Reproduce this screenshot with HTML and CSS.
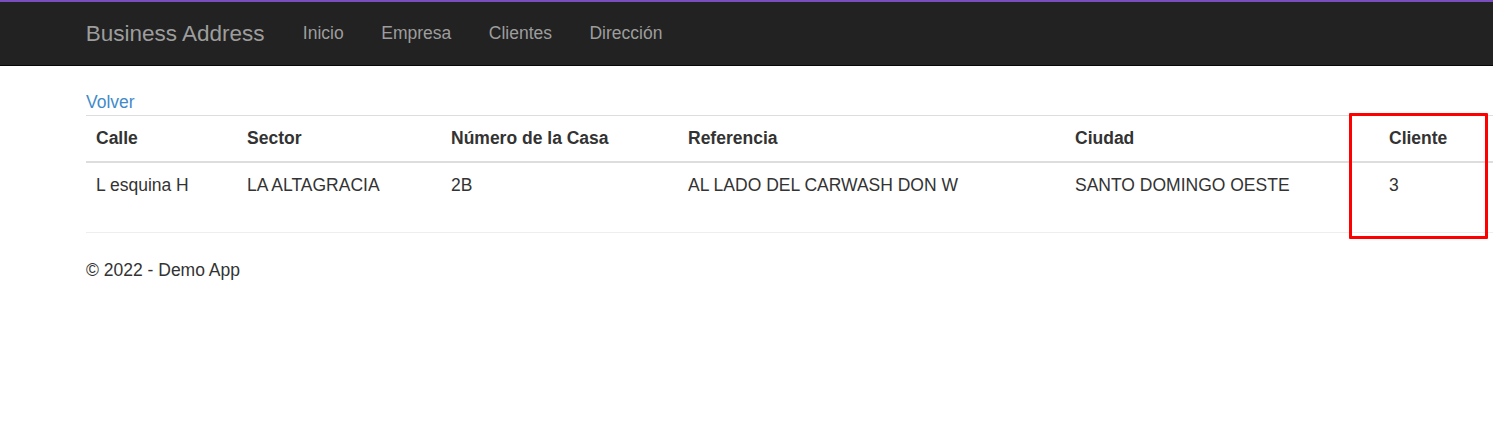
FILE: index.html
```html
<!DOCTYPE html>
<html lang="es">
<head>
<meta charset="utf-8">
<title>Business Address</title>
<link rel="stylesheet" href="styles.css">
</head>
<body>
<header class="navbar">
  <div class="nav-inner">
    <a class="brand" href="#">Business Address</a>
    <nav class="nav-links">
      <a href="#">Inicio</a>
      <a href="#">Empresa</a>
      <a href="#">Clientes</a>
      <a href="#">Dirección</a>
    </nav>
  </div>
</header>
<main class="body-content">
  <a class="back-link" href="#">Volver</a>
  <table class="table">
    <colgroup>
      <col class="c1"><col class="c2"><col class="c3"><col class="c4"><col class="c5"><col class="c6">
    </colgroup>
    <thead>
      <tr>
        <th>Calle</th>
        <th>Sector</th>
        <th>Número de la Casa</th>
        <th>Referencia</th>
        <th>Ciudad</th>
        <th>Cliente</th>
      </tr>
    </thead>
    <tbody>
      <tr>
        <td>L esquina H</td>
        <td>LA ALTAGRACIA</td>
        <td>2B</td>
        <td>AL LADO DEL CARWASH DON W</td>
        <td>SANTO DOMINGO OESTE</td>
        <td>3</td>
      </tr>
    </tbody>
  </table>
  <hr class="rule">
  <footer class="footer">
    <p>© 2022 - Demo App</p>
  </footer>
</main>
<div class="highlight"></div>
</body>
</html>
```

FILE: styles.css
```css
html, body {
  margin: 0;
  padding: 0;
  overflow: hidden;
}

body {
  font-family: "Liberation Sans", Arial, sans-serif;
  font-size: 17.5px;
  line-height: 25px;
  color: #333333;
  background: #ffffff;
  position: relative;
  width: 1493px;
  height: 447px;
}

a {
  text-decoration: none;
}

.navbar {
  background: #222222;
  border-top: 2px solid #7a4fbd;
  border-bottom: 1px solid #080808;
  height: 63px;
}

.nav-inner {
  display: flex;
  align-items: center;
  height: 100%;
  margin-left: 67px;
}

.brand {
  color: #9d9d9d;
  font-size: 22.5px;
  line-height: 25px;
  padding: 0 19.5px 0 18.75px;
}

.nav-links {
  display: flex;
}

.nav-links a {
  color: #9d9d9d;
  font-size: 17.5px;
  line-height: 25px;
  padding: 0 18.75px;
}

.body-content {
  padding-left: 86px;
  padding-top: 24px;
  width: 1407px;
}

.back-link {
  display: block;
  color: #428bca;
  line-height: 25px;
}

.table {
  width: 1407px;
  table-layout: fixed;
  border-collapse: collapse;
  border-spacing: 0;
  margin-bottom: 24px;
}

.c1 { width: 151px; }
.c2 { width: 204px; }
.c3 { width: 237px; }
.c4 { width: 387px; }
.c5 { width: 314px; }
.c6 { width: auto; }

.table th,
.table td {
  text-align: left;
  padding: 10px;
  line-height: 25px;
  vertical-align: top;
  white-space: nowrap;
}

.table th {
  font-weight: bold;
  border-top: 1px solid #dddddd;
  border-bottom: 2px solid #dddddd;
}

.rule {
  margin: 0;
  border: 0;
  border-top: 1px solid #eeeeee;
  width: 1407px;
}

.footer p {
  margin: 25px 0 0;
}

.highlight {
  position: absolute;
  left: 1349px;
  top: 113px;
  width: 133px;
  height: 120px;
  border: 3px solid #ff0000;
  border-radius: 1px;
}
```
